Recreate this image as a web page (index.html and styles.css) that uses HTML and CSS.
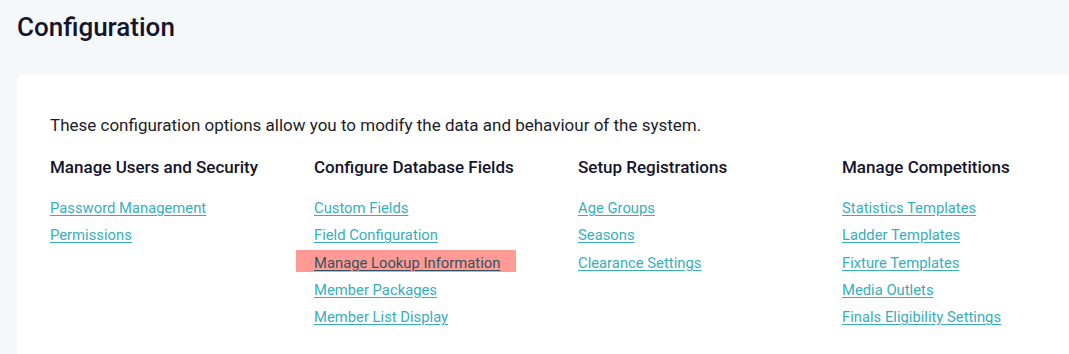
FILE: index.html
```html
<!DOCTYPE html>
<html lang="en">
<head>
    <meta charset="UTF-8">
    <meta name="viewport" content="width=device-width, initial-scale=1.0">
    <title>Configuration</title>
    <link rel="stylesheet" href="styles.css">
</head>
<body>
    <h1 class="page-title">Configuration</h1>

    <div class="card">
        <p class="intro">These configuration options allow you to modify the data and behaviour of the system.</p>

        <div class="columns">
            <div class="column">
                <h2>Manage Users and Security</h2>
                <ul>
                    <li><a href="#">Password Management</a></li>
                    <li><a href="#">Permissions</a></li>
                </ul>
            </div>
            <div class="column">
                <h2>Configure Database Fields</h2>
                <ul>
                    <li><a href="#">Custom Fields</a></li>
                    <li><a href="#">Field Configuration</a></li>
                    <li><a href="#" class="marked">Manage Lookup Information</a></li>
                    <li><a href="#">Member Packages</a></li>
                    <li><a href="#">Member List Display</a></li>
                </ul>
            </div>
            <div class="column">
                <h2>Setup Registrations</h2>
                <ul>
                    <li><a href="#">Age Groups</a></li>
                    <li><a href="#">Seasons</a></li>
                    <li><a href="#">Clearance Settings</a></li>
                </ul>
            </div>
            <div class="column">
                <h2>Manage Competitions</h2>
                <ul>
                    <li><a href="#">Statistics Templates</a></li>
                    <li><a href="#">Ladder Templates</a></li>
                    <li><a href="#">Fixture Templates</a></li>
                    <li><a href="#">Media Outlets</a></li>
                    <li><a href="#">Finals Eligibility Settings</a></li>
                </ul>
            </div>
        </div>
    </div>
</body>
</html>
```

FILE: styles.css
```css
/* page */
body {
    font-family: 'Roboto', 'Liberation Sans', sans-serif;
    margin: 0;
    padding: 0;
    background: #f5f8fb;
    color: #1a1a2a;
    overflow: hidden;
}

.page-title {
    font-size: 26px;
    font-weight: 500;
    color: #14142b;
    margin: 0;
    padding: 11px 17px 0;
    line-height: 32px;
}

.card {
    background: #ffffff;
    margin: 31px 0 0 17px;
    padding: 41px 33px 30px;
    border-radius: 6px 0 0 0;
    box-shadow: 0 1px 3px rgba(20, 40, 80, 0.04);
    min-height: 230px;
}

.intro {
    font-size: 17px;
    line-height: 20px;
    margin: 0 0 21px;
    color: #1c1c28;
}

.columns {
    display: grid;
    grid-template-columns: repeat(4, 264px);
}

.column h2 {
    font-size: 17px;
    font-weight: 500;
    color: #14142b;
    margin: 0 0 19px;
    line-height: 22px;
}

.column ul {
    list-style: none;
    margin: 0;
    padding: 0;
}

.column li {
    height: 27.3px;
    line-height: 22px;
}

.column a {
    font-size: 14.8px;
    color: #37aebd;
    text-decoration: underline;
    text-underline-offset: 2px;
}

.column a.marked {
    display: inline-block;
    background: #ff9a95;
    color: #2f5564;
    line-height: 18px;
    margin: -4px 0 0 -18px;
    padding: 4px 16px 0 18px;
}
```
